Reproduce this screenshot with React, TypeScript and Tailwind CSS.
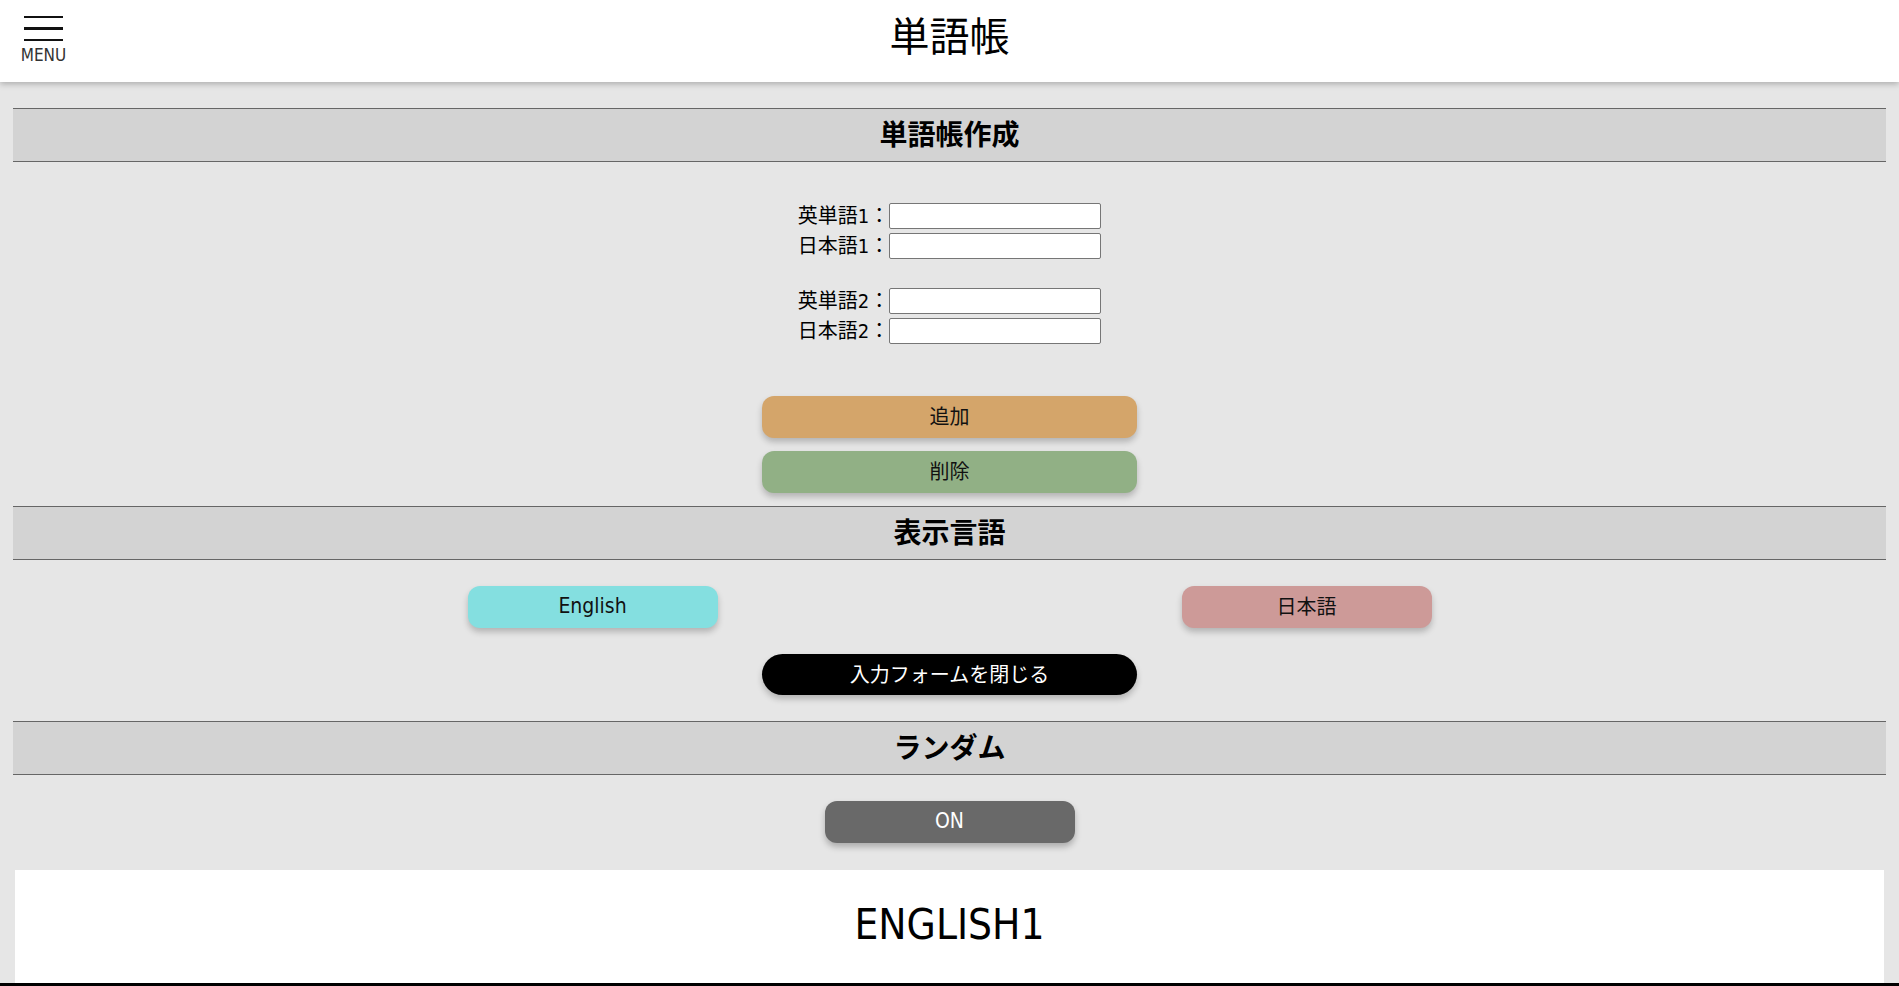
import React from "react";

const FONT = {
  fontFamily:
    '"DejaVu Sans Condensed", "DejaVu Sans", "Noto Sans CJK JP", sans-serif',
};

function SectionHeader({ title }: { title: string }) {
  return (
    <div className="mx-[13px] h-[54px] pb-[4px] border-y border-[#666666] bg-[#d3d3d3] flex items-center justify-center">
      <h2
        className="text-[28px] leading-[34px] font-bold text-black"
        style={{ fontFamily: '"Noto Sans CJK JP", sans-serif' }}
      >
        {title}
      </h2>
    </div>
  );
}

function Row({ label }: { label: string }) {
  return (
    <div className="flex items-center">
      <span
        className="text-[20px] leading-[26px] text-black whitespace-nowrap"
        style={{ fontFamily: '"DejaVu Sans Condensed", "Noto Sans CJK JP", sans-serif' }}
      >
        {label}
      </span>
      <input
        type="text"
        className="w-[212px] h-[26px] bg-white border border-[#767676] rounded-[2px] outline-none px-1 text-[16px]"
      />
    </div>
  );
}

export default function App() {
  return (
    <div className="min-h-screen bg-[#e6e6e6] text-black" style={FONT}>
      <header className="relative z-10 h-[82px] bg-white shadow-[0_2px_6px_rgba(0,0,0,0.25)] grid grid-cols-[1fr_auto_1fr]">
        <div className="pl-[21px] pt-[16px]">
          <div className="flex flex-col items-center w-[45px]">
            <div className="w-[39px] flex flex-col gap-[9px]">
              <div className="h-[2px] bg-[#111]" />
              <div className="h-[3px] bg-[#111]" />
              <div className="h-[2px] bg-[#111]" />
            </div>
            <span className="mt-[4px] text-[17px] leading-[20px] text-[#333]">
              MENU
            </span>
          </div>
        </div>
        <h1
          className="pt-[10px] text-[40px] leading-[48px] font-normal text-black"
          style={{ fontFamily: '"Noto Sans CJK JP", sans-serif' }}
        >
          単語帳
        </h1>
        <div />
      </header>

      <div className="pt-[26px]">
        <SectionHeader title="単語帳作成" />

        <div className="mt-[41px] flex flex-col items-center">
          <div className="flex flex-col gap-[4px]">
            <Row label="英単語1：" />
            <Row label="日本語1：" />
          </div>
          <div className="mt-[29px] flex flex-col gap-[4px]">
            <Row label="英単語2：" />
            <Row label="日本語2：" />
          </div>
        </div>

        <div className="mt-[52px] flex flex-col items-center gap-[13px]">
          <button className="w-[375px] h-[42px] rounded-[12px] bg-[#d4a56a] text-[20px] text-[#111] shadow-[0_4px_6px_rgba(0,0,0,0.22)]">
            追加
          </button>
          <button className="w-[375px] h-[42px] rounded-[12px] bg-[#91b085] text-[20px] text-[#111] shadow-[0_4px_6px_rgba(0,0,0,0.22)]">
            削除
          </button>
        </div>

        <div className="mt-[13px]">
          <SectionHeader title="表示言語" />
        </div>

        <div className="mt-[26px] flex justify-center gap-[464px]">
          <button className="w-[250px] h-[42px] rounded-[12px] bg-[#84dfe0] text-[21px] text-[#111] shadow-[0_4px_6px_rgba(0,0,0,0.22)]">
            English
          </button>
          <button className="w-[250px] h-[42px] rounded-[12px] bg-[#cd9a98] text-[20px] text-[#111] shadow-[0_4px_6px_rgba(0,0,0,0.22)]">
            日本語
          </button>
        </div>

        <div className="mt-[26px] flex justify-center">
          <button className="w-[375px] h-[41px] rounded-full bg-black text-[20px] text-white shadow-[0_4px_6px_rgba(0,0,0,0.22)]">
            入力フォームを閉じる
          </button>
        </div>

        <div className="mt-[26px]">
          <SectionHeader title="ランダム" />
        </div>

        <div className="mt-[26px] flex justify-center">
          <button className="w-[250px] h-[42px] rounded-[12px] bg-[#696969] text-[21px] text-white shadow-[0_4px_6px_rgba(0,0,0,0.25)]">
            ON
          </button>
        </div>

        <div className="mt-[27px] mx-[15px] h-[113px] bg-white flex items-center justify-center">
          <span className="text-[42px] leading-[50px] -mt-[4px]">ENGLISH1</span>
        </div>
        <div className="h-[6px] bg-black" />
      </div>
    </div>
  );
}
